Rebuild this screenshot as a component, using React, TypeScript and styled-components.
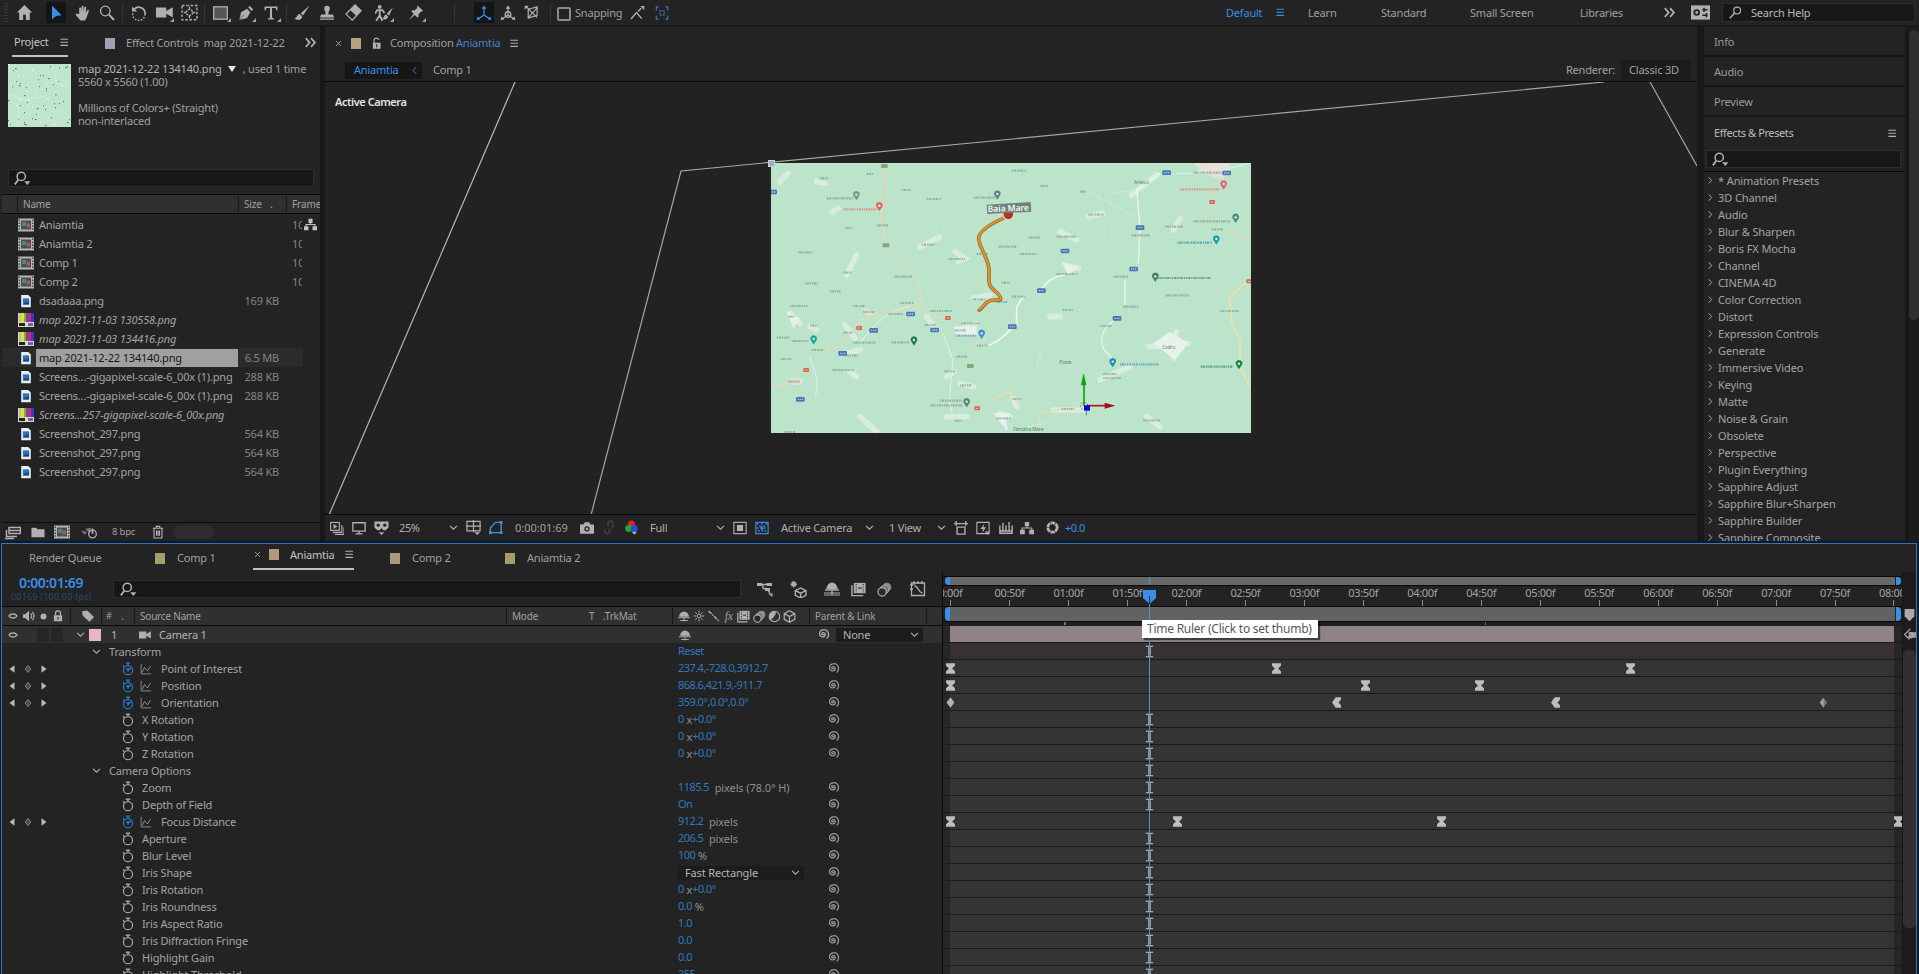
import React from 'react';
import styled, { createGlobalStyle, css } from 'styled-components';

const Global = createGlobalStyle`
  * { box-sizing: border-box; }
  body { margin: 0; background: #171717; overflow: hidden; }
  #root { font-family: "Noto Sans", "Open Sans", sans-serif; font-size: 11px; color: #a0a0a0; }
  svg { display: block; flex: none; }
`;

const BLUE = '#3a8ee6';
const VALUE = '#3278bd';

/* ---------- icons ---------- */

const S = { fill: 'none', stroke: 'currentColor', strokeWidth: 1.3 } as const;

const glyphs: Record<string, React.ReactNode> = {
  home: <path d="M8 1 0.8 8H3v7h3.7v-5h2.6v5H13V8h2.2z" fill="currentColor" />,
  arrow: <path d="M4 0.5v14l4-3.6 5.6-.6z" fill="currentColor" />,
  hand: <path d="M5.2 9V3.2a1 1 0 0 1 1.9-.2L7.4 7 7.7 1.5a1 1 0 0 1 1.9 0V7l.8-4.4a.9.9 0 0 1 1.8.3L11.8 8l1.5-2.7a.9.9 0 0 1 1.6.8l-2.3 6.4L11 15.6H6.6L2 10.2a1 1 0 0 1 1.5-1.4z" fill="currentColor" />,
  zoom: <><circle cx="6.3" cy="6" r="4.8" {...S} /><path d="m10 9.6 5 5.4" stroke="currentColor" strokeWidth="2" /></>,
  rotate: <><path d="M3.2 4.3A6.2 6.2 0 0 1 14 9" {...S} strokeWidth="1.7" /><path d="M14 9A6.2 6.2 0 1 1 2 7" {...S} strokeWidth="1.4" strokeDasharray="1.6 1.5" /><path d="M1 1.4v5.2h5.2z" fill="currentColor" /></>,
  cam: <path d="M0 3.2h9.7v3.3L15.8 3v9.6l-6.1-3.5v3.5H0z" fill="currentColor" />,
  anchor: <><rect x="1" y="1.4" width="14" height="13.4" {...S} strokeDasharray="2.4 1.6" /><circle cx="8" cy="8" r="2.9" {...S} strokeDasharray="2 1" /><path d="M8 2.6v2M8 11.4v2M2.6 8h2M11.4 8h2" {...S} /></>,
  rect: <rect x="0.7" y="1.8" width="13.6" height="12.4" fill="#555" stroke="currentColor" strokeWidth="1.3" />,
  pen: <path d="M1.2 15.3 2.8 7 9 3.6l3.6 3.6-3.4 6.1zM10 2.5 11.8.7l3.7 3.8-1.8 1.8z M1.5 15 6.4 9.8" fill="currentColor" stroke="#232323" strokeWidth=".5" />,
  type: <path d="M1.5 1.5h13v3.8h-1.2L12.6 3H9v9.8l2 .6v1.1H5v-1.1l2-.6V3H3.4l-.7 2.3H1.5z" fill="currentColor" />,
  brush: <path d="M15.6.6 6.8 8.2 9 10.4zM5.8 9c-2.7 0-2.3 3.6-5.4 4.4 2.7 2.2 7.2 2.1 7.8-2z" fill="currentColor" />,
  stamp: <path d="M5.2 3.6a2.8 2.8 0 0 1 5.6 0C10.800 5.500 9.400 6 9.400 9.500H14l1 3H1l1-3h4.600C6.600 6 5.200 5.500 5.200 3.600zM1 13.400h14v1.400H1z" fill="currentColor" />,
  eraser: <><path d="M9.500.8 15.200 6.300 6.800 15.200 1 9.500z" fill="none" stroke="currentColor" strokeWidth="1.200" /><path d="M9.500.8 15.200 6.300 10.600 11.200 4.900 5.700z" fill="currentColor" /></>,
  roto: <><circle cx="4.200" cy="2.600" r="1.700" fill="currentColor" /><path d="M0 8.500 2 5.500h4.500L8.500 8M4.200 5.500v4.500L1 15M4.200 10 6.500 15" {...S} strokeWidth="1.600" /><path d="M15.800 3 10.500 8.500 12.500 10.500zM9.800 9.400c-2 .4-1.600 3-3.600 4 2.600.8 5.400 0 5.400-2.400z" fill="currentColor" /></>,
  pin: <path d="M9.600.6 15.200 6l-1.400.6-.8-.1-2.600 2.900c.5 1.500.2 2.500-.7 3.300L6.700 9.900 1 15.300 5.600 8.700 3 6.100c1-.9 2.200-1.100 3.500-.6L9.300 3l-.2-1z" fill="currentColor" />,
  axis1: <><path d="M8 10V2M8 10 2 14M8 10l6 4" {...S} /><path d="M8 .5 5.600 3.800h4.800zM.6 15l1-3.800 2.600 3.200zM15.400 15l-1-3.800-2.600 3.200z" fill="currentColor" /></>,
  axis2: <><circle cx="8" cy="9.500" r="2.800" {...S} /><path d="M8 10V2M8 10 2 14M8 10l6 4" {...S} /><path d="M8 .5 5.600 3.800h4.800zM.6 15l1-3.800 2.600 3.200zM15.400 15l-1-3.800-2.600 3.200z" fill="currentColor" /></>,
  axis3: <><path d="M4.500 4.500 14 2v9l-9.500 3zM2 1.500l12 12M4 14 14 3" {...S} /><path d="M.8.800H5L.8 5z" fill="currentColor" /></>,
  snap1: <><path d="M1 15 7 8l5.500 6.500M8.600 6.800 12 3.500" {...S} strokeWidth="1.500" /><path d="M11 1h4.200v4.500z" fill="currentColor" /></>,
  snap2: <><path d="M4 1H1.500v4M12 1h2.500v4M4 15H1.500v-4M12 15h2.500v-4" {...S} /><path d="M5.500 5.500h5v5h-5z" {...S} strokeDasharray="2 1.200" /></>,
  more: <path d="m2 2.500 4.500 5L2 12.500M8 2.500l4.500 5-4.500 5" {...S} strokeWidth="2" />,
  menu: <path d="M2 3.200h11M2 7.700h11M2 12.200h11" {...S} strokeWidth="1.500" />,
  work: <><rect x="0" y="2" width="16" height="12" fill="currentColor" /><circle cx="4.800" cy="8" r="2" fill="none" stroke="#222" strokeWidth="1.600" /><path d="M9.500 5.700h4.500M9.500 10.300h4.500M11 4v3.500M13 8.500V12" stroke="#222" strokeWidth="1.300" /></>,
  search: <><circle cx="10" cy="5.500" r="4.200" {...S} strokeWidth="1.500" /><path d="M7 8.500 1 15" stroke="currentColor" strokeWidth="1.800" /></>,
  searchDrop: <><circle cx="6.800" cy="6" r="3.900" {...S} strokeWidth="1.400" /><path d="M4.200 9 .8 13.500" stroke="currentColor" strokeWidth="1.700" /><path d="M9.500 10.500h6L12.500 14z" fill="currentColor" /></>,
  lockOpen: <><rect x="3.500" y="7" width="9.500" height="7.500" fill="currentColor" /><path d="M5 7V3.500a3 3 0 0 1 5.800 0" {...S} strokeWidth="1.500" /><path d="M8.200 9v3.500" stroke="#222" strokeWidth="1.300" /></>,
  lock: <><rect x="2.500" y="7" width="11" height="8" fill="currentColor" /><path d="M4.700 7V4.500a3.300 3.300 0 0 1 6.600 0V7" {...S} strokeWidth="1.800" /><path d="M8 9.300v3.200" stroke="#222" strokeWidth="1.500" /></>,
  down: <path d="m3 5.500 5 5 5-5" {...S} strokeWidth="1.500" />,
  right: <path d="m5 2.500 5 5.500-5 5.500" {...S} strokeWidth="1.700" />,
  left: <path d="M11 2 5.500 8l5.500 6" {...S} strokeWidth="1.500" />,
  close: <path d="m3.500 3.500 9 9M12.500 3.500l-9 9" {...S} strokeWidth="1.500" />,
  comp: <><rect x="0" y="1.500" width="16" height="13" fill="#b5b5b5" /><rect x="3" y="3.500" width="10" height="9" fill="#4a4f50" /><rect x="4" y="5" width="4" height="4" fill="#4b8a78" /><rect x="8.500" y="6.500" width="3.500" height="4" fill="#a65a5a" /><path d="M1.200 2.500v11M14.800 2.500v11" stroke="#333" strokeWidth="1.200" strokeDasharray="1.600 1.300" /></>,
  file: <><path d="M2.500 1h8l3 3v11h-11z" fill="#e9edf2" /><rect x="4.500" y="5" width="7" height="7" fill="#2b74ba" /><path d="m4.500 12 3-3.500L9 10l2.500-3v5z" fill="#174a80" /></>,
  missing: <><rect x="0" y="1" width="16" height="14" fill="#d8d8c8" /><rect x="1" y="1" width="2.500" height="9" fill="#bbb" /><rect x="3" y="1" width="3" height="9" fill="#e4e423" /><rect x="6" y="1" width="2" height="9" fill="#60c030" /><rect x="8" y="1" width="3" height="9" fill="#a22bb0" /><rect x="11" y="1" width="2" height="9" fill="#d03050" /><rect x="13" y="1" width="3" height="9" fill="#2b3bd8" /><rect x="1" y="11" width="6" height="3" fill="#222" /><rect x="10" y="11" width="5" height="3" fill="#7b5bb0" /></>,
  tree: <><path d="M5.500 1h5v5h-5zM0 10h5v5H0zM11 10h5v5h-5zM5.500 10h5v5h-5z" fill="currentColor" /><path d="M8 6v4M2.500 10.500V8h11v2.500" {...S} /></>,
  tree3: <><path d="M5.500 1h5v5h-5zM0 10h5.500v5H0zM10.500 10H16v5h-5.500z" fill="currentColor" /><path d="M8 6v2.300M2.500 10.500V8h11v2.500" {...S} /></>,
  interpret: <path d="M4 3.500h11.500v6H4zM1.500 6v6.500H12M4 6.500h11M0 14.500h9" {...S} strokeWidth="1.500" />,
  folder: <path d="M.5 3h5.500l1.500 1.800h8V14H.5z" fill="currentColor" />,
  adjust: <><path d="M0 6.500 6 8 4 11zM4 5l6-1.500-1 6z" fill="#777" /><circle cx="11.500" cy="10" r="3.800" {...S} /><path d="M11.500 4.500V10" {...S} strokeWidth="1.600" /></>,
  trash: <path d="M2 3.700h12M6 3.500V1.500h4v2M3.500 4v10.800h9V4M6.300 6.300v6M8 6.300v6M9.700 6.300v6" {...S} />,
  play: <><rect x="0.700" y="1.700" width="10" height="9" {...S} /><path d="m4 3.500 4.500 2.700L4 9z" fill="currentColor" /><path d="M3 13h10.500V4.500M5.500 15.300H16V7" {...S} /></>,
  monitor: <path d="M1 2h14v9.500H1zM8 11.500V14.500M4 14.800h8" {...S} strokeWidth="1.500" />,
  goggles: <><path d="M.5 1.500h15v6.500l-3 3H10L8 8.500 6 11H3.500l-3-3z" fill="currentColor" /><circle cx="4.500" cy="5.500" r="1.700" fill="#222" /><circle cx="11.500" cy="5.500" r="1.700" fill="#222" /><path d="M5 13h6l-3 3z" fill="currentColor" /></>,
  grid: <><path d="M1 1.500h14v10H1zM8 0v13M0 6.500h16" {...S} /><path d="M9 13h6l-3 3z" fill="currentColor" /></>,
  mask: <><path d="M2.500 13.500V8.500L8 2.500h6v11z" {...S} strokeWidth="1.500" /><path d="M1 12h3v3H1zM12.500 12h3v3h-3zM12.500 1h3v3h-3z" fill="currentColor" /></>,
  photo: <><path d="M0 4h4l1.500-2.500h5L12 4h4v10.500H0z" fill="currentColor" /><circle cx="8" cy="9" r="3" fill="#222" /><circle cx="8" cy="9" r="1.500" fill="currentColor" /></>,
  ghost: <path d="M6.500 7V3.500a2.500 2.500 0 0 1 5 0V9M3 9v3a2.500 2.500 0 0 0 5 0V9" fill="none" stroke="#3c3c3c" strokeWidth="2" />,
  rgb: <><circle cx="8" cy="4.200" r="3.700" fill="#e02424" /><circle cx="5" cy="9" r="3.700" fill="#23a637" /><circle cx="11" cy="9" r="3.700" fill="#3048d8" /><path d="M8 12.500h6l-3 3.300z" fill="currentColor" /></>,
  roi: <><rect x="1" y="1.500" width="14" height="13" {...S} /><rect x="4.500" y="4.500" width="7" height="7" fill="currentColor" /></>,
  transp: <><rect x="1" y="1.500" width="14" height="13" {...S} /><path d="M2 2.500 14 13.500M14 2.500 2 13.500M8 2v12M2 8h12" {...S} strokeDasharray="2 2" strokeWidth="1.800" /></>,
  pixel: <path d="M0 3h16M2.500 0v5.500M13.500 0v5.500M3.500 7h9v8h-9z" {...S} strokeWidth="1.600" />,
  fast: <><path d="M1 1.500h14v13H1z" {...S} /><path d="M9.500 3 5 9h3l-1 4.500L11.500 7h-3z" fill="currentColor" /><path d="M10 12h6l-3 4z" fill="currentColor" /></>,
  bars: <path d="M1 5v9h14V5M4.500 2v9M8 5v6M11.500 1v10M1 11.500h14" {...S} strokeWidth="1.600" />,
  aperture: <><circle cx="8" cy="8" r="5.800" fill="none" stroke="currentColor" strokeWidth="3.400" strokeDasharray="5.400 .7" /></>,
  eye: <><path d="M1.500 8a7 5 0 0 1 13 0 7 5 0 0 1-13 0z" {...S} strokeWidth="2.200" /></>,
  speaker: <><path d="M0 5.500h3L8 1v14L3 10.500H0z" fill="currentColor" /><path d="M10 4.500a5 5 0 0 1 0 7M12.500 2.500a8 8 0 0 1 0 11" {...S} strokeWidth="1.600" /></>,
  dot: <circle cx="8" cy="8" r="4.400" fill="currentColor" />,
  tag: <path d="M0 1.500 7 .8l9 8.400-6 6.300L1 7.500z" fill="currentColor" />,
  shy: <><path d="M1.500 9a6.500 7 0 0 1 13 0z" fill="currentColor" /><path d="M0 10.300h16M8 10v5M5 4v5M11 4v5M3 14h10" {...S} strokeWidth="1.300" /></>,
  sun: <><circle cx="8" cy="8" r="2.600" {...S} /><path d="M8 1v3M8 12v3M1 8h3M12 8h3M3 3l2 2M11 11l2 2M13 3l-2 2M5 11l-2 2" {...S} /></>,
  quality: <path d="m1 1.500 13.500 13" fill="none" stroke="currentColor" strokeWidth="2" strokeDasharray="5 1.500 2 1.500" />,
  film: <><path d="M3 1h12.500v11H3z" fill="currentColor" /><path d="M1 3.500V14.500H13" {...S} strokeWidth="1.500" /><path d="M5.500 2v9M13 2v9" stroke="#333" strokeWidth="1.200" strokeDasharray="1.500 1.200" /><path d="M7.500 6.500h4" stroke="#444" strokeWidth="1.500" /></>,
  blur: <><circle cx="10.500" cy="5.500" r="4.700" fill="#8b8b8b" /><circle cx="8" cy="8" r="4.700" fill="#777" stroke="#aaa" /><circle cx="5.500" cy="10.500" r="4.500" fill="#2a2a2a" stroke="currentColor" strokeWidth="1.300" /></>,
  half: <><circle cx="8" cy="8" r="6.500" {...S} /><path d="M3.400 12.600A6.500 6.500 0 0 1 8 1.500C12 3 8 8 3.400 12.600z" fill="currentColor" /></>,
  cube: <path d="M8 1 14.500 4.500v7L8 15 1.500 11.500v-7zM1.500 4.500 8 8l6.500-3.500M8 8v7" {...S} strokeWidth="1.500" />,
  flow: <><path d="M4 3.500h6M6 3.500v4h4M10 8l3 4" {...S} /><path d="M0 2h5v3H0zM9.500 2H15v3H9.500zM8 7h5v3H8zM11 12.500h4.500V16z" fill="currentColor" /></>,
  draft: <><path d="M10 6.500 15 9v4.500L10 16l-5-2.500V9zM5 9l5 2.500L15 9M10 11.500V16" {...S} /><path d="M3.500 0v6M.5 3h6M1.500 1l4 4M5.500 1l-4 4" {...S} /></>,
  shyBig: <><rect x="0" y="11" width="16" height="4" fill="#666" /><path d="M2.500 8a5.500 6.500 0 0 1 11 0z" fill="currentColor" /><path d="M1 9h14M8 8v6M5.500 3v6M10.500 3v6" {...S} /></>,
  graphEd: <path d="M1.500 2h13v12.500h-13zM0 4h3M0 8h3M4 0v4M8 0v3M12 0v3M4.500 5c4 0 4 7 8 7" {...S} />,
  watch: <><circle cx="8" cy="9.300" r="5.200" {...S} strokeWidth="1.500" /><path d="M8 4V1.500M5.500 1.300h5M3.800 5.500 2.500 3.800" {...S} strokeWidth="1.700" /></>,
  watchOn: <><circle cx="8" cy="9.300" r="5.200" {...S} strokeWidth="1.500" /><path d="M8 4V1.500M5.500 1.300h5M3.800 5.500 2.500 3.800M8 9.500 11 6.500M6 8h2v3" {...S} strokeWidth="1.600" /></>,
  graph: <path d="M1.500 1v13.500H15M3 12.500 6 6l4 4.500L14 4" {...S} />,
  whip: <path d="M8.400 8.200a1.300 1.300 0 1 1-1.700-1.500c2.200-.5 3.800 1 3.300 3-.6 2.300-4 3-5.800.9C2 8 3.300 4.500 6 3.400c3-1.200 6-.5 7.400 2.300 1.200 2.600 1 6-1.600 8" {...S} strokeWidth="1.500" transform="translate(0 -.8)" />,
  prev: <path d="M12 2v12L4 8z" fill="currentColor" />,
  next: <path d="M4 2v12l8-6z" fill="currentColor" />,
  key: <path d="m8 2.500 4.500 5.500L8 13.500 3.500 8z" fill="#4a4a4a" stroke="currentColor" strokeWidth="1.300" />,
  hour: <path d="M2.500 1.500h11v3L10 8l3.500 3.500v3h-11v-3L6 8 2.500 4.500z" fill="#bdbdbd" />,
  dia: <path d="m8 1.500 4.800 6.500L8 14.500 3.200 8z" fill="#b4b4b4" />,
  diaHalf: <><path d="m8 2 4.500 6L8 14 3.500 8z" fill="#777" /><path d="M8 2 3.500 8 8 14z" fill="#a5a5a5" /></>,
  ease: <path d="M7 1.500h6.500v3L10.500 8l3 3.500v3H7L2.500 8z" fill="#bdbdbd" />,
  beam: <path d="M3.500 1.500h3.300L8 3l1.200-1.500h3.300M3.500 14.500h3.300L8 13l1.200 1.500h3.300M7.200 3v10M8.800 3v10" fill="none" stroke="#c8c8c8" strokeWidth="1.300" />,
  marker: <path d="M2 0h12v9l-6 6-6-6z" fill="#a9a9a9" />,
  cbutton: <><path d="M7 5h9v7H7z" fill="#999" /><path d="m9 1-7 7 6 6M8 6.500a3 3 0 1 1-1 4" {...S} strokeWidth="1.500" /></>,
};

const Svg = styled.svg<{ $s: number; $c?: string }>`
  width: ${p => p.$s}px;
  height: ${p => p.$s}px;
  color: ${p => p.$c || '#b0b0b0'};
`;
const Icon = ({ n, s = 14, c }: { n: string; s?: number; c?: string }) => (
  <Svg viewBox="0 0 16 16" $s={s} $c={c}>{glyphs[n]}</Svg>
);

/* ---------- shared parts ---------- */

const Page = styled.div`
  width: 1919px; height: 974px; overflow: hidden; background: #181818;
  display: flex; flex-direction: column;
`;
const Label = styled.span<{ $w?: number; $c?: string; $ls?: number; $fs?: number; $ml?: number }>`
  white-space: nowrap;
  flex: none;
  line-height: 14px;
  ${p => p.$w !== undefined && css`width: ${p.$w}px;`}
  color: ${p => p.$c || 'inherit'};
  letter-spacing: ${p => p.$ls ?? -0.2}px;
  font-size: ${p => p.$fs ?? 11}px;
  margin-left: ${p => p.$ml ?? 0}px;
`;
const Slot = styled.div<{ $w: number; $ml?: number; $on?: boolean }>`
  width: ${p => p.$w}px;
  flex: none;
  margin-left: ${p => p.$ml ?? 0}px;
  align-self: stretch;
  display: flex;
  align-items: center;
  justify-content: center;
`;
const Swatch = styled.i<{ $c: string; $ml?: number }>`
  width: 10px; height: 11px; flex: none; margin-left: ${p => p.$ml ?? 0}px; background: ${p => p.$c};
`;
const Field = styled.div<{ $ml?: number; $w: number; $h?: number }>`
  width: ${p => p.$w}px; height: ${p => p.$h ?? 18}px; flex: none;
  margin-left: ${p => p.$ml ?? 0}px;
  padding-left: 5px;
  display: flex; align-items: center;
  background: #171717; border: 1px solid #2d2d2d;
`;

/* ---------- top tool bar ---------- */

const ToolBar = styled.header`
  height: 25px; flex: none; display: flex; align-items: center; background: #232323;
`;
const Grip = styled.i`
  width: 4px; height: 20px; margin-left: 4px; flex: none;
  background: repeating-linear-gradient(#3a3a3a 0 1px, transparent 1px 3px);
`;
const Tool = styled.div<{ $on?: boolean; $ml?: number; $more?: boolean }>`
  position: relative;
  width: 20px; height: 21px; flex: none; margin-left: ${p => p.$ml ?? 5}px;
  display: flex; align-items: center; justify-content: center;
  background: ${p => (p.$on ? '#141518' : 'transparent')};
  ${p => p.$more && css`
    &::after { content: ''; position: absolute; right: 0; bottom: 1px; border: 2px solid; border-color: transparent #a0a0a0 #a0a0a0 transparent; }
  `}
`;
const Sep = styled.i<{ $ml: number; $mr: number }>`
  width: 1px; height: 20px; flex: none; margin: 0 ${p => p.$mr}px 0 ${p => p.$ml}px; background: #343434;
`;
const Check = styled.i`
  width: 14px; height: 14px; border: 2px solid #8a8a8a; border-radius: 2px; flex: none; margin: 2px 0 0 6px;
`;

const TopBar = () => (
  <ToolBar>
    <Grip />
    <Tool $ml={6}><Icon n="home" s={17} /></Tool>
    <Tool $ml={12} $on><Icon n="arrow" s={16} c={BLUE} /></Tool>
    <Tool $ml={6}><Icon n="hand" s={16} /></Tool>
    <Tool $ml={5}><Icon n="zoom" s={16} /></Tool>
    <Sep $ml={5} $mr={6} />
    <Tool $ml={0}><Icon n="rotate" s={16} /></Tool>
    <Tool $ml={5} $more><Icon n="cam" s={17} /></Tool>
    <Tool $ml={5}><Icon n="anchor" s={17} /></Tool>
    <Sep $ml={5} $mr={6} />
    <Tool $ml={0} $more><Icon n="rect" s={16} /></Tool>
    <Tool $ml={5} $more><Icon n="pen" s={16} /></Tool>
    <Tool $ml={5} $more><Icon n="type" s={16} /></Tool>
    <Sep $ml={5} $mr={5} />
    <Tool $ml={0}><Icon n="brush" s={16} /></Tool>
    <Tool $ml={5}><Icon n="stamp" s={16} /></Tool>
    <Tool $ml={6}><Icon n="eraser" s={17} /></Tool>
    <Tool $ml={11} $more><Icon n="roto" s={18} /></Tool>
    <Tool $ml={12} $more><Icon n="pin" s={16} /></Tool>
    <Sep $ml={28} $mr={19} />
    <Tool $ml={0} $on><Icon n="axis1" s={16} c={BLUE} /></Tool>
    <Tool $ml={4}><Icon n="axis2" s={16} /></Tool>
    <Tool $ml={3}><Icon n="axis3" s={15} /></Tool>
    <Sep $ml={9} $mr={0} />
    <Check />
    <Label $ml={4} $w={53}>Snapping</Label>
    <Tool $ml={-1}><Icon n="snap1" s={15} /></Tool>
    <Tool $ml={5}><Icon n="snap2" s={14} c="#3a78bd" /></Tool>
    <Label $ml={554} $w={47} $c={BLUE}>Default</Label>
    <Slot $w={14}><Icon n="menu" s={11} c={BLUE} /></Slot>
    <Label $ml={21} $w={73}>Learn</Label>
    <Label $w={89}>Standard</Label>
    <Label $w={110}>Small Screen</Label>
    <Label $w={82}>Libraries</Label>
    <Slot $w={16}><Icon n="more" s={14} /></Slot>
    <Slot $ml={11} $w={22}><Icon n="work" s={19} /></Slot>
    <Field $ml={11} $w={193} $h={19}>
      <Slot $w={14}><Icon n="search" s={13} /></Slot>
      <Label $ml={9} $c="#b8b8b8">Search Help</Label>
    </Field>
  </ToolBar>
);

/* ---------- project panel ---------- */

const Upper = styled.main`
  height: 514px; flex: none; margin-top: 2px; display: flex;
`;
const ProjectPanel = styled.section`
  width: 320px; flex: none; background: #232323; display: flex; flex-direction: column; overflow: hidden;
`;
const TabLine = styled.div<{ $h?: number }>`
  height: ${p => p.$h ?? 32}px; flex: none; display: flex; align-items: center;
`;
const ActiveTab = styled.div<{ $ml: number; $w: number; $pad: number }>`
  margin-left: ${p => p.$ml}px; width: ${p => p.$w}px; height: 26px; flex: none; margin-top: 2px;
  padding: 0 0 2px ${p => p.$pad}px;
  display: flex; align-items: center; border-bottom: 2px solid #c4c4c4; color: #c4c4c4;
`;
const Info = styled.div`
  height: 110px; flex: none; display: flex; padding: 5px 0 0 8px;
`;
const Thumb = styled.svg`width: 63px; height: 63px; background: #bfe6cd;`;
const Meta = styled.div`
  margin: -2px 0 0 7px; display: flex; flex-direction: column; line-height: 13px;
  span { line-height: 13px; }
`;
const MetaTop = styled.div`display: flex; align-items: center; height: 13px; margin-bottom: 0;`;
const Caret = styled.i`
  border: 4px solid transparent; border-top: 6px solid #e6e6e6; border-bottom: 0; margin: 0 7px 0 6px;
`;
const TableHead = styled.div`
  height: 20px; flex: none; display: flex; align-items: center; background: #303030;
  border-top: 1px solid #0c0c0c; border-bottom: 1px solid #0c0c0c; margin: 7px 0 1px 2px;
`;
const HeadCell = styled.div<{ $w: number; $pad?: number }>`
  width: ${p => p.$w}px; height: 16px; flex: none; overflow: hidden;
  border-left: 1px solid #161616; padding-left: ${p => p.$pad ?? 5}px;
  display: flex; align-items: center;
`;
const FileRow = styled.div<{ $sel?: boolean }>`
  height: 19.03px; flex: none; width: 301px; margin-left: 2px; padding-left: 15px;
  display: flex; align-items: center;
  background: ${p => (p.$sel ? '#2b2b2b' : 'transparent')};
`;
const FileName = styled.div<{ $sel?: boolean; $it?: boolean }>`
  width: 202px; height: 18px; line-height: 18px; flex: none; margin-left: 1px; padding-left: 3px;
  white-space: nowrap; letter-spacing: -0.18px;
  font-style: ${p => (p.$it ? 'italic' : 'normal')};
  background: ${p => (p.$sel ? '#a0a0a0' : 'transparent')};
  color: ${p => (p.$sel ? '#161616' : '#a3a3a3')};
`;
const FileSize = styled.div`
  width: 42px; padding-right: 1px; text-align: right; color: #858585; letter-spacing: -0.2px; margin-right: 12px; flex: none; white-space: nowrap;
`;
const Frames = styled.div`width: 10px; overflow: hidden; white-space: nowrap; color: #858585;`;
const PanelFoot = styled.div`
  height: 19px; margin: auto 0 0 2px; flex: none; display: flex; align-items: center; border-top: 1px solid #0c0c0c;
`;
const Pill = styled.i`width: 41px; height: 14px; border-radius: 7px; background: #2d2d2d; margin-left: 8px;`;

const files: [string, string, string][] = [
  ['comp', 'Aniamtia', ''], ['comp', 'Aniamtia 2', ''], ['comp', 'Comp 1', ''], ['comp', 'Comp 2', ''],
  ['file', 'dsadaaa.png', '169 KB'],
  ['missing', 'map 2021-11-03 130558.png', ''], ['missing', 'map 2021-11-03 134416.png', ''],
  ['file', 'map 2021-12-22 134140.png', '6.5 MB'],
  ['file', 'Screens...-gigapixel-scale-6_00x (1).png', '288 KB'],
  ['file', 'Screens...-gigapixel-scale-6_00x (1).png', '288 KB'],
  ['missing', 'Screens...257-gigapixel-scale-6_00x.png', ''],
  ['file', 'Screenshot_297.png', '564 KB'], ['file', 'Screenshot_297.png', '564 KB'], ['file', 'Screenshot_297.png', '564 KB'],
];

const specks = Array.from({ length: 70 }, (_, i) => [(i * 37 + (i * i) % 11) % 62, (i * 23 + (i * i * 3) % 17) % 62]);

const Project = () => (
  <ProjectPanel>
    <TabLine>
      <ActiveTab $ml={12} $w={56} $pad={2}>
        <Label $w={45}>Project</Label><Icon n="menu" s={11} />
      </ActiveTab>
      <Swatch $ml={37} $c="#a29fb4" />
      <Label $ml={11} $w={178}>Effect Controls&nbsp; map 2021-12-22</Label>
      <Slot $w={14}><Icon n="more" s={14} /></Slot>
    </TabLine>
    <Info>
      <Thumb viewBox="0 0 63 63">
        {specks.map(([x, y], i) => (
          <rect key={i} x={x} y={y} width={i % 4 ? 1 : 1.6} height="1.2" fill={i % 3 ? '#4f8573' : '#eef8f0'} />
        ))}
        <path d="M10 63V40M44 0l4 18 14 6M0 30l18 6 20-4" stroke="#d8efdc" fill="none" strokeWidth=".7" />
      </Thumb>
      <Meta>
        <MetaTop>
          <Label $c="#b4b4b4" $ls={-0.15}>map 2021-12-22 134140.png</Label><Caret />
          <Label>, used 1 time</Label>
        </MetaTop>
        <Label>5560 x 5560 (1.00)</Label>
        <Label>&nbsp;</Label>
        <Label>Millions of Colors+ (Straight)</Label>
        <Label>non-interlaced</Label>
      </Meta>
    </Info>
    <Field $ml={8} $w={306}><Icon n="searchDrop" s={17} /></Field>
    <TableHead>
      <HeadCell $w={221} style={{ marginLeft: 15 }}><Label $fs={10}>Name</Label></HeadCell>
      <HeadCell $w={48}><Label $fs={10} $w={26}>Size</Label><Label>.</Label></HeadCell>
      <HeadCell $w={34}><Label $fs={10} $ls={-0.1}>Frame</Label></HeadCell>
    </TableHead>
    {files.map(([k, name, size], i) => (
      <FileRow key={i} $sel={i === 7}>
        <Slot $w={18}><Icon n={k} s={k === 'file' ? 14 : 16} /></Slot>
        <FileName $sel={i === 7} $it={k === 'missing'}>{name}</FileName>
        <FileSize>{size}</FileSize>
        {i < 4 && <Frames>10</Frames>}
        {i === 0 && <Slot $w={14} $ml={1} style={{ marginRight: -14 }}><Icon n="tree3" s={13} c="#c4c4c4" /></Slot>}
      </FileRow>
    ))}
    <PanelFoot>
      <Slot $w={18} $ml={2}><Icon n="interpret" s={16} /></Slot>
      <Slot $w={16} $ml={8}><Icon n="folder" s={14} /></Slot>
      <Slot $w={18} $ml={7}><Icon n="comp" s={16} /></Slot>
      <Slot $w={18} $ml={9}><Icon n="adjust" s={16} /></Slot>
      <Label $ml={14} $w={38} $fs={9.5}>8 bpc</Label>
      <Slot $w={14} $ml={1}><Icon n="trash" s={14} /></Slot>
      <Pill />
    </PanelFoot>
  </ProjectPanel>
);

/* ---------- composition panel ---------- */

const CompPanel = styled.section`
  width: 1372px; flex: none; margin-left: 5px; background: #232323; display: flex; flex-direction: column;
`;
const CompTab = styled.div`
  margin-left: 20px; width: 77px; height: 17px; padding: 0 3px 0 9px; flex: none;
  display: flex; align-items: center; justify-content: space-between; background: #161616;
`;
const Renderer = styled.div`
  margin-left: auto; margin-right: 7px; display: flex; align-items: center; gap: 6px;
`;
const DarkBox = styled.div`
  width: 69px; height: 20px; padding-left: 8px; display: flex; align-items: center; background: #1c1c1c;
`;
const Viewport = styled.div`
  position: relative; height: 434px; flex: none; border-top: 1px solid #0a0a0a; border-bottom: 1px solid #0a0a0a; overflow: hidden; background: #222;
`;
const ViewName = styled.div`
  padding: 12px 0 0 10px; color: #e2e2e2; font-weight: 600; letter-spacing: -0.45px; line-height: 15px; font-size: 11px;
`;
const Wire = styled.svg`position: absolute; left: 0; top: 0; width: 1372px; height: 433px;`;
const MapView = styled.svg`position: absolute; left: 446px; top: 81px; width: 480px; height: 270px;`;
const CompFoot = styled.div`height: 25px; flex: none; display: flex; align-items: center; padding-left: 3px;`;

const whites = 'M60 95l25-25M170 95l25 5M215 185l20-10M480 290l60-30M585 305l30 20-20 10M900 245l50 25M985 200l45-10M1115 135l75-60M1240 240l20-35M260 375l30-60M90 490l30 30M150 530l20 10M255 525l30 40M500 500l30 40M590 540l60-20M560 680l20-15M260 610l40-10M270 665l20 15M1165 590l120-10M1230 590l20-45M1230 590l10 35M880 780l90 0M600 700l40 10M760 745l10 25M300 800l50 45M720 790l30 10M560 800l60 0M1020 690l90-40M1160 800l40 30M640 445l50-10M870 500h30M920 350l35 5M1320 65l80-15';
const roads = [
  ['M550 550l28 80-10 120 10 50', '#e6f0e2', 3],
  ['M1200 70l-70 50 10 110-5 110', '#eaf5ee', 4],
  ['M1250 70h100l120-30', '#d6eee4', 4],
  ['M1095 390v75', '#eef6f0', 4],
  ['M1070 505q-60 40-40 90l25 30', '#e8f4ee', 4],
  ['M770 530v-60l20-30M845 420q20-40 70-45', '#eef6ee', 5],
  ['M670 590q40-5 90-60', '#eef6ee', 5],
  ['M300 580q70-100 150-110', '#dfece0', 4],
  ['M150 620l22 70-5 50', '#dbe9ee', 4],
  ['M740 840l-10-50', '#e8eef4', 8],
  ['M378 50l-10 180 10 50 45 50 50 60 20 100 60 15', '#f0dcae', 3],
  ['M375 60l-5 170', '#efc5b4', 3],
  ['M170 600l70-10 60-80 100-25 90-20', '#ead9a6', 3],
  ['M690 750l60-25 25 40M840 820l-5-30 120-20', '#f0dca0', 4],
  ['M1465 390l-55 50 5 80 25 50v80l30 60', '#efe0a2', 5],
  ['M1350 200l15-90M1400 240q40 25 75 25', '#f2cfae', 4],
  ['M40 710l70-20M645 620l5-50', '#f2d5b0', 4],
  ['M980 120l150 85M1060 130l60-10M830 650l15-50M800 830l60-10', '#d4eddb', 2],
  ['M1255 640l-5 200M1020 60l40 300M530 200l30 110M120 300l60 90', '#b4dfc4', 2],
] as const;
const shields = [[1220, 68], [1400, 69], [1140, 233], [915, 303], [1121, 357], [844, 422], [757, 530], [1071, 505], [452, 492], [341, 541], [524, 540], [248, 610], [121, 748], [38, 126]];
const reds = [[563, 504], [297, 534], [138, 660], [651, 775], [1356, 156], [1467, 394]];
const pins: [number, number, string][] = [
  [289, 138, '#6f9a8c'], [712, 136, '#55898a'], [358, 171, '#e2645f'], [1391, 106, '#e8636a'], [1427, 206, '#4f8a80'],
  [1369, 271, '#169fb0'], [1186, 383, '#47806f'], [161, 571, '#16a893'], [462, 574, '#1d7d5c'], [665, 554, '#4a86d8'],
  [1058, 639, '#1690b4'], [1437, 645, '#12854e'], [620, 759, '#55857c'],
];
const ticks: [number, number, number, string][] = [
  [180, 85, 26, ''], [320, 72, 22, ''], [200, 145, 80, ''], [500, 147, 44, ''], [640, 143, 66, ''], [425, 120, 28, ''],
  [840, 108, 24, ''], [960, 125, 20, ''], [755, 62, 46, ''], [250, 178, 100, '#e07a75'], [255, 234, 22, ''], [350, 226, 36, ''],
  [485, 284, 40, ''], [115, 307, 42, ''], [565, 327, 50, ''], [650, 312, 36, ''], [715, 290, 54, ''], [780, 312, 50, ''],
  [890, 260, 60, ''], [805, 263, 34, ''], [985, 194, 46, ''], [1115, 256, 54, ''], [1215, 230, 56, ''], [1260, 118, 116, '#e07a75'],
  [1300, 214, 112, ''], [1355, 238, 36, ''], [1252, 278, 104, '#2f8fa0'], [1300, 68, 84, ''], [135, 400, 40, ''],
  [210, 424, 32, ''], [250, 368, 26, ''], [403, 380, 54, ''], [725, 398, 26, ''], [755, 440, 42, ''], [636, 448, 38, ''],
  [708, 456, 36, '#6a9acb'], [888, 372, 64, ''], [1060, 380, 44, ''], [1090, 470, 46, ''], [280, 468, 34, ''], [90, 468, 52, ''],
  [310, 486, 36, ''], [385, 492, 44, ''], [510, 483, 66, ''], [420, 459, 42, ''], [85, 500, 20, ''], [150, 527, 22, ''],
  [50, 563, 40, ''], [95, 573, 50, ''], [155, 600, 38, ''], [250, 548, 28, ''], [280, 578, 66, ''], [255, 616, 40, ''],
  [395, 577, 52, ''], [493, 525, 34, ''], [605, 520, 54, ''], [583, 541, 34, ''], [588, 557, 60, '#5d8fd0'], [650, 587, 36, ''],
  [588, 620, 36, ''], [552, 664, 32, ''], [600, 706, 36, ''], [62, 627, 32, ''], [85, 695, 36, ''], [215, 660, 66, ''],
  [540, 752, 66, ''], [510, 766, 98, ''], [583, 812, 22, ''], [710, 805, 44, ''], [757, 747, 28, ''], [905, 777, 38, ''],
  [1030, 672, 40, ''], [1030, 684, 52, ''], [1080, 643, 118, '#4a93b8'], [1322, 650, 98, '#35846a'], [1195, 384, 158, '#4c8069'],
  [1216, 436, 72, ''], [1022, 528, 32, ''], [1380, 483, 58, ''], [1150, 811, 50, ''], [72, 846, 34, ''], [908, 480, 30, ''],
];
const places: [number, number, string][] = [
  [898, 642, 'Posta'], [1206, 596, 'Codru'], [760, 843, 'Fântâna Mare'], [1122, 102, 'Arieșul'],
];

const MapArt = () => (
  <MapView viewBox="33 39 1440 810">
    <rect x="33" y="39" width="1440" height="810" fill="#bce4cb" />
    <path d={whites} stroke="#deefe3" strokeWidth="17" strokeLinecap="round" fill="none" opacity=".8" />
    <path d="M80 485l40 20-20 30zM580 530h70v25h-60zM1180 580l50-35 55 35-40 50zM700 790l50 0-20 40zM905 335l50 15-30 25z" fill="#e7f2ea" />
    <path d="M1300 40h110l-20 50-40-10zM90 685h40l-5 20H95zM310 475l40 12-30 12z" fill="#eedfd8" opacity=".8" />
    {roads.map(([d, c, w], i) => <path key={i} d={d} stroke={c} strokeWidth={w} fill="none" strokeLinejoin="round" />)}
    {ticks.map(([x, y, w, c], i) => (
      <path key={i} d={`M${x} ${y}h${w}`} stroke={c || '#7d9a8e'} strokeWidth="6.500" strokeDasharray="4 2 7 2.500 3 2" opacity=".65" />
    ))}
    {places.map(([x, y, t]) => (
      <text key={t} x={x} y={y} fontSize="14" fill="#5c7a70" fontFamily="Noto Sans">{t}</text>
    ))}
    {shields.map(([x, y], i) => (
      <g key={i}><rect x={x - 13} y={y - 7} width="26" height="14" rx="3" fill="#4878b4" /><path d={`M${x - 8} ${y}h16`} stroke="#a9c4e2" strokeWidth="4" strokeDasharray="4 2" /></g>
    ))}
    {reds.map(([x, y], i) => <g key={i}><rect x={x - 8} y={y - 6} width="17" height="12" rx="3" fill="#d9604e" /><path d={`M${x - 4} ${y}h9`} stroke="#f2c0b4" strokeWidth="3" /></g>)}
    {[[378, 286], [373, 48], [631, 648]].map(([x, y], i) => <rect key={i} x={x - 10} y={y - 6} width="20" height="12" rx="2" fill="#86a878" />)}
    {pins.map(([x, y, c], i) => (
      <g key={i}><path d={`M${x} ${y + 13}l-9-14a10 10 0 1 1 18 0z`} fill={c} /><circle cx={x} cy={y - 4} r="3.500" fill="#e2f2ea" /></g>
    ))}
    <path d="M740 200C690 222 655 245 656 266c2 28 28 55 31 92 1 18-4 38 4 50 10 16 30 22 31 38 0 12-18-4-40 10-10 8-14 18-24 24" fill="none" stroke="#8a6a33" strokeWidth="11" strokeLinecap="round" />
    <path d="M740 199C690 221 654 245 656 266c2 28 28 55 31 92 1 18-4 38 4 50 10 16 30 22 31 36 0 14-18-2-40 12-10 8-14 16-24 22" fill="none" stroke="#e08f2c" strokeWidth="7" strokeLinecap="round" />
    <circle cx="745" cy="193" r="18" fill="#efdcae" /><circle cx="745" cy="193" r="14.500" fill="#b23430" />
    <path d="M680 164 812 156 814 185 682 192z" fill="#6d8478" />
    <text x="683" y="184" transform="rotate(-2 745 178)" fontSize="26" fontWeight="600" fill="#f4f7f4" textLength="124" lengthAdjust="spacingAndGlyphs" fontFamily="Noto Sans">Baia Mare</text>
    <circle cx="972" cy="768" r="17" fill="none" stroke="#d8e4dc" strokeWidth="3" /><circle cx="972" cy="768" r="11" fill="none" stroke="#65786e" strokeWidth="2.500" strokeDasharray="6 4" />
    <path d="M972 768V700" stroke="#12a312" strokeWidth="5" /><path d="M971 673l7 32h-14z" fill="#12a312" stroke="#12a312" strokeWidth="2" />
    <path d="M980 767h60" stroke="#b3141c" strokeWidth="5" /><path d="M1066 767l-32 9v-18z" fill="#a01018" />
    <path d="M972 766h18v16h-18z" fill="#0606c8" /><path d="M979 782v14" stroke="#445" strokeWidth="2" />
  </MapView>
);

const Composition = () => (
  <CompPanel>
    <TabLine>
      <Slot $w={10} $ml={8}><Icon n="close" s={9} /></Slot>
      <Swatch $ml={8} $c="#b4a27e" />
      <Slot $w={12} $ml={9}><Icon n="lockOpen" s={13} /></Slot>
      <Label $ml={8} $w={66}>Composition</Label>
      <Label $w={51} $c="#3f83c8">Aniamtia</Label>
      <Slot $w={14}><Icon n="menu" s={11} /></Slot>
    </TabLine>
    <TabLine $h={22}>
      <CompTab><Label $c={BLUE}>Aniamtia</Label><Icon n="left" s={9} c={BLUE} /></CompTab>
      <Label $ml={11}>Comp 1</Label>
      <Renderer><Label>Renderer:</Label><DarkBox><Label>Classic 3D</Label></DarkBox></Renderer>
    </TabLine>
    <Viewport>
      <Wire viewBox="0 0 1372 433" fill="none" stroke="#aaa795" strokeWidth="1.200">
        <path d="M190 0 4 433" stroke="#b5b5b0" />
        <path d="M266 433 356 89 1279 0M1325 0l47 84" />
      </Wire>
      <ViewName>Active Camera</ViewName>
      <MapArt />
      <Wire viewBox="0 0 1372 433"><rect x="443.500" y="78.500" width="6" height="6" fill="#a4abc4" stroke="#c9cede" /></Wire>
    </Viewport>
    <CompFoot>
      <Slot $w={16} $ml={1}><Icon n="play" s={14} /></Slot>
      <Slot $w={16} $ml={6}><Icon n="monitor" s={14} /></Slot>
      <Slot $w={16} $ml={6}><Icon n="goggles" s={15} /></Slot>
      <Label $ml={10} $w={46} $c="#b0b0b0" $ls={-0.4}>25%</Label>
      <Slot $w={16}><Icon n="down" s={11} /></Slot>
      <Slot $w={16} $ml={4}><Icon n="grid" s={15} /></Slot>
      <Slot $w={16} $ml={6}><Icon n="mask" s={15} c={BLUE} /></Slot>
      <Label $ml={12} $w={64} $ls={0}>0:00:01:69</Label>
      <Slot $w={16}><Icon n="photo" s={14} /></Slot>
      <Slot $w={16} $ml={6}><Icon n="ghost" s={15} /></Slot>
      <Slot $w={16} $ml={6}><Icon n="rgb" s={15} /></Slot>
      <Label $ml={11} $w={62} $c="#b0b0b0">Full</Label>
      <Slot $w={16}><Icon n="down" s={11} /></Slot>
      <Slot $w={16} $ml={4}><Icon n="roi" s={14} /></Slot>
      <Slot $w={16} $ml={6}><Icon n="transp" s={14} c={BLUE} /></Slot>
      <Label $ml={11} $w={80} $c="#b0b0b0">Active Camera</Label>
      <Slot $w={16}><Icon n="down" s={11} /></Slot>
      <Label $ml={12} $w={44} $c="#b0b0b0">1 View</Label>
      <Slot $w={16}><Icon n="down" s={11} /></Slot>
      <Slot $w={16} $ml={4}><Icon n="pixel" s={14} /></Slot>
      <Slot $w={16} $ml={6}><Icon n="fast" s={14} /></Slot>
      <Slot $w={16} $ml={7}><Icon n="bars" s={14} /></Slot>
      <Slot $w={16} $ml={5}><Icon n="tree3" s={14} /></Slot>
      <Slot $w={16} $ml={9}><Icon n="aperture" s={13} /></Slot>
      <Label $ml={5} $c={BLUE} $ls={-0.5}>+0.0</Label>
    </CompFoot>
  </CompPanel>
);

/* ---------- effects panel ---------- */

const SidePanel = styled.aside`
  width: 201px; flex: none; margin-left: 7px; background: #232323; overflow: hidden;
`;
const Stack = styled.div<{ $last?: boolean }>`
  height: 30px; display: flex; align-items: center; justify-content: space-between; padding: 2px 7px 0 10px;
  border-bottom: ${p => (p.$last ? 0 : 2)}px solid #161616;
  color: ${p => (p.$last ? '#bdbdbd' : '#9a9a9a')};
`;
const EffectList = styled.div`margin-top: 3px; border-top: 1px solid #0a0a0a;`;
const EffectRow = styled.div`height: 17px; display: flex; align-items: center; padding-left: 1px; color: #a3a3a3;`;
const ScrollTrack = styled.div`width: 10px; margin-left: 4px; flex: none; background: #1b1b1b;`;
const ScrollThumb = styled.i<{ $h: number; $mt: number }>`
  display: block; height: ${p => p.$h}px; margin-top: ${p => p.$mt}px; border-radius: 5px; background: #303030;
`;
const effects = ['* Animation Presets', '3D Channel', 'Audio', 'Blur & Sharpen', 'Boris FX Mocha', 'Channel', 'CINEMA 4D',
  'Color Correction', 'Distort', 'Expression Controls', 'Generate', 'Immersive Video', 'Keying', 'Matte', 'Noise & Grain',
  'Obsolete', 'Perspective', 'Plugin Everything', 'Sapphire Adjust', 'Sapphire Blur+Sharpen', 'Sapphire Builder', 'Sapphire Composite'];

const Effects = () => (
  <>
    <SidePanel>
      {['Info', 'Audio', 'Preview'].map(t => <Stack key={t}><Label>{t}</Label></Stack>)}
      <Stack $last><Label $ls={-0.4}>Effects &amp; Presets</Label><Icon n="menu" s={11} /></Stack>
      <Field $ml={2} $w={195} style={{ marginTop: 3 }}><Icon n="searchDrop" s={17} /></Field>
      <EffectList>
        {effects.map(e => (
          <EffectRow key={e}><Slot $w={10}><Icon n="right" s={9} /></Slot><Label $ml={3} $ls={-0.1}>{e}</Label></EffectRow>
        ))}
      </EffectList>
    </SidePanel>
    <ScrollTrack><ScrollThumb $mt={3} $h={290} /></ScrollTrack>
  </>
);

/* ---------- timeline ---------- */

const Timeline = styled.section`
  height: 431px; flex: none; margin: 2px 2px 0 1px; background: #232323; overflow: hidden;
  border: 1px solid #3a73ad; border-bottom: 0; box-shadow: 0 0 0 2px #0c1b2c;
`;
const TimelineBody = styled.div`height: 402px; display: flex;`;
const LeftSide = styled.div`width: 941px; flex: none; border-right: 1px solid #0a0a0a; overflow: hidden;`;
const Controls = styled.div`height: 34px; display: flex; align-items: center;`;
const Clock = styled.div`
  width: 111px; flex: none; padding-left: 9px; display: flex; flex-direction: column;
`;
const Time = styled.span`padding-left: 8px; font-size: 14px; font-weight: 600; line-height: 16px; color: ${BLUE}; letter-spacing: -0.35px;`;
const Fps = styled.span`font-size: 9px; line-height: 12px; color: #27496f; letter-spacing: 0.2px; white-space: nowrap;`;
const Header = styled.div`
  height: 20px; display: flex; align-items: center; background: #303030;
  border-top: 1px solid #0a0a0a; border-bottom: 1px solid #0a0a0a;
`;
const Col = styled.div<{ $w: number; $pad?: number; $first?: boolean }>`
  width: ${p => p.$w}px; height: 16px; flex: none; padding-left: ${p => p.$pad ?? 5}px;
  display: flex; align-items: center; border-left: ${p => (p.$first ? 0 : 1)}px solid #161616;
`;
const LayerRow = styled.div`height: 17px; display: flex; align-items: center; background: #303030; color: #b4b4b4;`;
const Toggle = styled.i`width: 12px; height: 14px; margin-right: 2px; background: #262626; flex: none;`;
const Dropdown = styled.div<{ $w: number; $ml?: number }>`
  width: ${p => p.$w}px; height: 14px; flex: none; margin-left: ${p => p.$ml ?? 0}px; padding: 0 3px 0 7px;
  display: flex; align-items: center; justify-content: space-between; background: #1c1c1c; color: #b4b4b4;
`;
const PropRow = styled.div`
  height: 17px; display: grid; grid-template-columns: 116px 20px 540px 147px 16px; align-items: center;
`;
const KeyNav = styled.div`display: flex; align-items: center; gap: 6px; padding-left: 5px;`;
const PropName = styled.div`display: flex; align-items: center; color: #a3a3a3;`;
const GroupHead = styled.div`display: flex; align-items: center; height: 17px; padding-left: 89px; color: #a3a3a3;`;
const Value = styled.div`display: flex; align-items: center; margin-top: -2px; white-space: nowrap;`;

type Prop = { name: string; group?: boolean; keyed?: boolean; v?: [string, string?][]; menu?: string; keys?: [string, number][] };
const B = 'b';
const props: Prop[] = [
  { name: 'Transform', group: true, v: [['Reset', B]] },
  { name: 'Point of Interest', keyed: true, v: [['237.4,-728.0,3912.7', B]], keys: [['hour', 950], ['hour', 1276], ['hour', 1630]] },
  { name: 'Position', keyed: true, v: [['868.6,421.9,-911.7', B]], keys: [['hour', 950], ['hour', 1365], ['hour', 1479]] },
  { name: 'Orientation', keyed: true, v: [['359.0°,0.0°,0.0°', B]], keys: [['dia', 950], ['ease', 1336], ['ease', 1555], ['diaHalf', 1823]] },
  { name: 'X Rotation', v: [['0', B], [' x'], ['+0.0°', B]] },
  { name: 'Y Rotation', v: [['0', B], [' x'], ['+0.0°', B]] },
  { name: 'Z Rotation', v: [['0', B], [' x'], ['+0.0°', B]] },
  { name: 'Camera Options', group: true },
  { name: 'Zoom', v: [['1185.5', B], ['  pixels (78.0° H)']] },
  { name: 'Depth of Field', v: [['On', B]] },
  { name: 'Focus Distance', keyed: true, v: [['912.2', B], ['  pixels']], keys: [['hour', 950], ['hour', 1177], ['hour', 1441], ['hour', 1898]] },
  { name: 'Aperture', v: [['206.5', B], ['  pixels']] },
  { name: 'Blur Level', v: [['100', B], [' %']] },
  { name: 'Iris Shape', menu: 'Fast Rectangle' },
  { name: 'Iris Rotation', v: [['0', B], [' x'], ['+0.0°', B]] },
  { name: 'Iris Roundness', v: [['0.0', B], [' %']] },
  { name: 'Iris Aspect Ratio', v: [['1.0', B]] },
  { name: 'Iris Diffraction Fringe', v: [['0.0', B]] },
  { name: 'Highlight Gain', v: [['0.0', B]] },
  { name: 'Highlight Threshold', v: [['255', B]] },
];

const ValuePart = styled.span<{ $b?: boolean }>`
  white-space: pre; line-height: 14px; letter-spacing: ${p => (p.$b ? -0.55 : -0.1)}px;
  color: ${p => (p.$b ? VALUE : '#8f8f8f')};
  position: relative; top: ${p => (p.$b ? 0 : 1)}px;
`;
const Values = ({ v }: { v?: [string, string?][] }) => (
  <Value>{v?.map(([t, k], i) => <ValuePart key={i} $b={!!k}>{t}</ValuePart>)}</Value>
);

const Property = ({ p }: { p: Prop }) => p.group ? (
  <PropRow>
    <GroupHead style={{ gridColumn: '1 / 4' }}><Icon n="down" s={11} /><Label $ml={7} $ls={-0.15}>{p.name}</Label></GroupHead>
    <Values v={p.v} />
  </PropRow>
) : (
  <PropRow>
    <KeyNav>{p.keyed && <><Icon n="prev" s={10} c="#bbb" /><Icon n="key" s={10} c="#999" /><Icon n="next" s={10} c="#bbb" /></>}</KeyNav>
    <Slot $w={20}><Icon n={p.keyed ? 'watchOn' : 'watch'} s={14} c={p.keyed ? '#2f78c0' : '#a0a0a0'} /></Slot>
    <PropName>
      {p.keyed && <Slot $w={16}><Icon n="graph" s={12} c="#8a8a8a" /></Slot>}
      <Label $ml={p.keyed ? 7 : 4} $ls={-0.15}>{p.name}</Label>
    </PropName>
    {p.menu ? <Dropdown $w={126}><Label $ls={-0.15}>{p.menu}</Label><Icon n="down" s={11} /></Dropdown> : <Values v={p.v} />}
    <Slot $w={16}><Icon n="whip" s={13} c="#9a9a9a" /></Slot>
  </PropRow>
);

const Right = styled.div`position: relative; flex: 1; display: flex; overflow: hidden;`;
const Lanes = styled.div`width: 959px; flex: none; overflow: hidden;`;
const RangeBar = styled.div<{ $h: number; $top?: number; $c: string }>`
  height: ${p => p.$h}px; margin-top: ${p => p.$top ?? 0}px; display: flex; padding: 0 1px 0 2px;
  border-top: 1px solid #0a0a0a; border-bottom: 1px solid #0a0a0a;
  &::before, &::after { content: ''; width: 5px; background: ${BLUE}; border-radius: 4px 0 0 4px; }
  &::after { border-radius: 0 4px 4px 0; margin-left: 1px; }
  & > i { flex: 1; background: ${p => p.$c}; }
`;
const Ruler = styled.div`height: 20px; display: flex; margin-left: -22px;`;
const Mark = styled.div`
  width: 58.97px; flex: none; display: flex; flex-direction: column; align-items: center; justify-content: space-between;
  font-size: 11px; line-height: 14px; letter-spacing: -0.35px; color: #a3a3a3;
  &::after { content: ''; width: 1px; height: 6px; background: #8a8a8a; }
`;
const CacheStrip = styled.div`
  height: 4px; display: flex; background: #1e1e1e; padding-left: 121px;
  i { width: 2px; height: 3px; background: #3f8f78; } i + i { margin-left: 419px; width: 1px; background: #666; }
`;
const Lane = styled.div<{ $tone?: string }>`
  position: relative; height: 17px; padding: 0 8px 0 7px; background: #262626; border-bottom: 1px solid #1b1b1b;
  &::before { content: ''; display: block; height: 100%; background: ${p => p.$tone || '#343434'}; }
`;
const KeyAt = styled.div<{ $x: number }>`position: absolute; top: 2px; left: ${p => p.$x - 943 - 6.5}px;`;
const Side = styled.div`width: 14px; flex: none; padding-top: 37px; background: #1c1c1c; border-left: 1px solid #161616;`;
const SideTop = styled.div`height: 35px; margin-left: -1px; display: flex; flex-direction: column; justify-content: space-between; align-items: center; padding-bottom: 3px;`;
const Head = styled.div`
  position: absolute; left: 206px; top: 19px; width: 1px; bottom: 0; background: #4793dc;
  svg { position: absolute; left: -6px; top: -1px; }
`;
const NavTick = styled.i`position: absolute; left: 206px; top: 5px; width: 1px; height: 8px; background: #4793dc;`;
const Tip = styled.div`
  position: absolute; left: 199px; top: 48px; width: 176px; height: 18px; padding-left: 5px;
  background: #fff; color: #575757; line-height: 18px; font-size: 12px; letter-spacing: -0.25px; white-space: nowrap;
  box-shadow: 2px 2px 1px #0008;
`;

const times = Array.from({ length: 17 }, (_, i) => `${i === 0 ? '0' : '0' + Math.floor(i / 2)}:${i % 2 ? '50' : '00'}f`);

const TimelinePanel = () => (
  <Timeline>
    <TabLine $h={28}>
      <Label $ml={27} $w={126}>Render Queue</Label>
      <Swatch $c="#a69d6c" /><Label $ml={12} $w={78}>Comp 1</Label>
      <ActiveTab $ml={-2} $w={101} $pad={0} style={{ marginTop: -3 }}>
        <Icon n="close" s={9} /><Swatch $ml={7} $c="#b09b78" /><Label $ml={11} $w={54}>Aniamtia</Label><Icon n="menu" s={11} />
      </ActiveTab>
      <Swatch $ml={36} $c="#ab987a" /><Label $ml={12} $w={93}>Comp 2</Label>
      <Swatch $c="#a69d6c" /><Label $ml={12}>Aniamtia 2</Label>
    </TabLine>
    <TimelineBody>
      <LeftSide>
        <Controls>
          <Clock><Time>0:00:01:69</Time><Fps>00169 (100.00 fps)</Fps></Clock>
          <Field $w={628}><Slot $w={18}><Icon n="searchDrop" s={17} /></Slot></Field>
          <Slot $w={18} $ml={15}><Icon n="flow" s={16} /></Slot>
          <Slot $w={18} $ml={15}><Icon n="draft" s={17} /></Slot>
          <Slot $w={18} $ml={16}><Icon n="shyBig" s={16} /></Slot>
          <Slot $w={18} $ml={8}><Icon n="film" s={15} /></Slot>
          <Slot $w={18} $ml={8}><Icon n="blur" s={15} /></Slot>
          <Slot $w={18} $ml={16}><Icon n="graphEd" s={16} /></Slot>
        </Controls>
        <Header>
          <Col $first $w={68} $pad={5}>
            <Slot $w={12}><Icon n="eye" s={10} /></Slot><Slot $w={14} $ml={3}><Icon n="speaker" s={12} /></Slot>
            <Slot $w={12} $ml={1}><Icon n="dot" s={11} /></Slot><Slot $w={12} $ml={3}><Icon n="lock" s={12} /></Slot>
          </Col>
          <Col $w={31} $pad={11}><Icon n="tag" s={12} /></Col>
          <Col $w={33} $pad={4}><Label $fs={9} $w={15}>#</Label><Label>.</Label></Col>
          <Col $w={372}><Label $fs={10}>Source Name</Label></Col>
          <Col $w={166} $pad={5}><Label $fs={10} $w={77}>Mode</Label><Label $fs={10} $w={14}>T</Label><Label $fs={10}>.TrkMat</Label></Col>
          <Col $w={137} $pad={3}>
            {['shy', 'sun', 'quality'].map(n => <Slot key={n} $w={15.1}><Icon n={n} s={12} /></Slot>)}
            <Slot $w={15.1}><Label $fs={12} style={{ fontStyle: 'italic', fontFamily: '"Liberation Serif", serif' }}>fx</Label></Slot>
            {['film', 'blur', 'half', 'cube'].map(n => <Slot key={n} $w={15.1}><Icon n={n} s={13} /></Slot>)}
          </Col>
          <Col $w={117}><Label $fs={10}>Parent &amp; Link</Label></Col>
          <Col $w={1} />
        </Header>
        <LayerRow>
          <Slot $w={12} $ml={5}><Icon n="eye" s={10} /></Slot>
          <Toggle style={{ marginLeft: 18 }} /><Toggle />
          <Slot $w={12} $ml={9}><Icon n="down" s={11} /></Slot>
          <Swatch $c="#e9b3c9" $ml={3} style={{ width: 12, height: 12 }} />
          <Label $ml={10} $w={27}>1</Label>
          <Slot $w={14}><Icon n="cam" s={12} /></Slot>
          <Label $ml={7} $w={519}>Camera 1</Label>
          <Slot $w={14}><Icon n="shy" s={12} /></Slot>
          <Slot $w={14} $ml={124}><Icon n="whip" s={13} /></Slot>
          <Dropdown $w={87} $ml={6}><Label>None</Label><Icon n="down" s={11} /></Dropdown>
        </LayerRow>
        {props.map(p => <Property key={p.name} p={p} />)}
      </LeftSide>
      <Right>
        <Lanes>
          <RangeBar $h={10} $top={4} $c="#696969"><i /></RangeBar>
          <Ruler>{times.map((t, i) => <Mark key={i}>{t}</Mark>)}</Ruler>
          <RangeBar $h={16} $c="#626262"><i /></RangeBar>
          <CacheStrip><i /><i /></CacheStrip>
          <Lane $tone="#918287" />
          {props.map((p, i) => (
            <Lane key={p.name} $tone={i === 0 ? '#383132' : undefined}>
              {p.keys?.map(([n, x]) => <KeyAt key={x} $x={x}><Icon n={n} s={13} /></KeyAt>)}
              {!p.keys && <KeyAt $x={1149.5}><Icon n="beam" s={13} /></KeyAt>}
            </Lane>
          ))}
        </Lanes>
        <Side>
          <SideTop><Icon n="marker" s={13} /><Icon n="cbutton" s={13} /></SideTop>
          <ScrollThumb $mt={6} $h={278} />
        </Side>
        <NavTick />
        <Head><svg width="13" height="14" viewBox="0 0 13 14"><path d="M0 0h13v8L6.500 14 0 8z" fill={BLUE} /><path d="M6.500 6v8" stroke="#173a63" /></svg></Head>
        <Tip>Time Ruler (Click to set thumb)</Tip>
      </Right>
    </TimelineBody>
  </Timeline>
);

export default function App() {
  return (
    <>
      <Global />
      <Page>
        <TopBar />
        <Upper><Project /><Composition /><Effects /></Upper>
        <TimelinePanel />
      </Page>
    </>
  );
}
